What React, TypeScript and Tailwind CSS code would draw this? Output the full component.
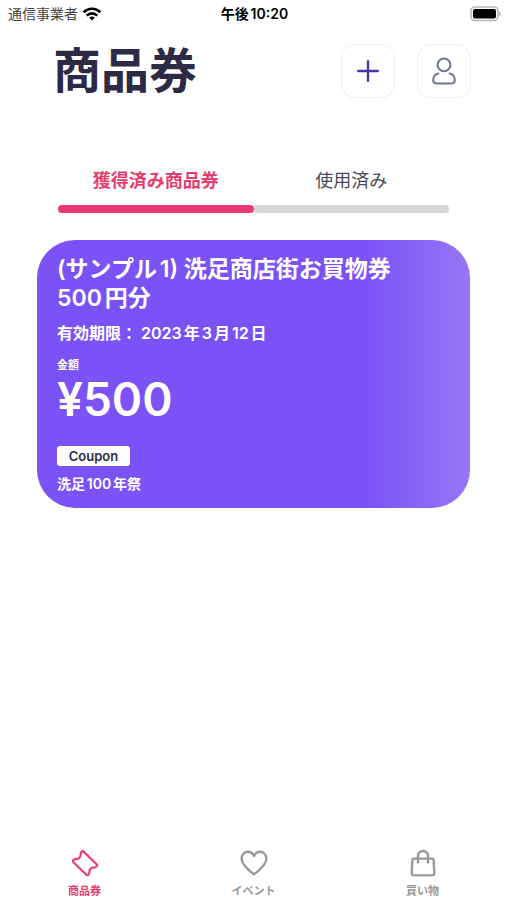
import React from 'react';

const tabs = [
  { label: '獲得済み商品券', active: true },
  { label: '使用済み', active: false },
];

function WifiIcon() {
  return (
    <svg width="20" height="14" viewBox="0 0 20 14" fill="none" stroke="#000" strokeWidth="2.6" aria-hidden="true">
      <path d="M1.6 5.2a12 12 0 0 1 16.8 0" />
      <path d="M4.7 8.6a7.5 7.5 0 0 1 10.6 0" />
      <path d="M10 13.6 7.2 10.8a4 4 0 0 1 5.6 0Z" fill="#000" stroke="none" />
    </svg>
  );
}

function BatteryIcon() {
  return (
    <svg width="32" height="16" viewBox="0 0 32 16" aria-hidden="true">
      <rect x="2" y="1" width="27" height="13.5" rx="4" fill="#fff" stroke="#b8b8b8" strokeWidth="1.6" />
      <rect x="4" y="3" width="23" height="9.5" rx="2" fill="#000" />
      <path d="M30.2 5.4v4.8c2-1 2-3.8 0-4.8Z" fill="#a8a8a8" />
    </svg>
  );
}

function PlusIcon() {
  return (
    <svg width="24" height="24" viewBox="0 0 24 24" fill="none" stroke="#4d35a3" strokeWidth="2.4" strokeLinecap="round" aria-hidden="true">
      <path d="M12 2.2v19.6M2.2 12h19.6" />
    </svg>
  );
}

function UserIcon() {
  return (
    <svg width="26" height="28" viewBox="0 0 26 28" fill="none" stroke="#6e7891" strokeWidth="2" strokeLinecap="round" strokeLinejoin="round" aria-hidden="true">
      <circle cx="13" cy="7.8" r="6.4" />
      <path d="M7.4 16.4C4 17 2.2 19.4 2.2 23c0 2.4 1 3.4 3.2 3.4h15.2c2.2 0 3.2-1 3.2-3.4 0-3.6-1.8-6-5.2-6.6" />
    </svg>
  );
}

function TicketIcon() {
  return (
    <svg width="28" height="28" viewBox="0 0 28 28" fill="none" stroke="#e63e70" strokeWidth="2.2" strokeLinejoin="round" aria-hidden="true">
      <path d="M12.6 2.6a1.4 1.4 0 0 0-2.2.2L9.6 4.8c.6 3.200-1.800 5.600-5 5l-2 1.200a1.400 1.400 0 0 0-.2 2.200L15.400 25.800a1.400 1.400 0 0 0 2.200-.2l.8-2c-.6-3.200 1.800-5.600 5-5l2-1.200a1.400 1.400 0 0 0 .2-2.200Z" />
    </svg>
  );
}

function HeartIcon() {
  return (
    <svg width="28" height="28" viewBox="0 0 28 28" fill="none" stroke="#999" strokeWidth="2.4" strokeLinejoin="round" aria-hidden="true">
      <path d="M14 25.4C9 21.6 1.6 16 1.6 9.8 1.6 5.6 4.4 2.8 7.8 2.8c2.8 0 5 1.6 6.2 4.2 1.2-2.6 3.4-4.2 6.2-4.2 3.4 0 6.2 2.8 6.2 7C26.4 16 19 21.6 14 25.4Z" />
    </svg>
  );
}

function BagIcon() {
  return (
    <svg width="28" height="28" viewBox="0 0 28 28" fill="none" stroke="#999" strokeWidth="2.4" strokeLinecap="round" strokeLinejoin="round" aria-hidden="true">
      <path d="M5 9.6h18c1 0 1.5.5 1.6 1.4l.7 12.8c.1 1.7-.7 2.6-2.3 2.6H5c-1.6 0-2.4-.9-2.3-2.6L3.400 11C3.500 10.100 4 9.600 5 9.600Z" />
      <path d="M9 13.4V7a5 5 0 0 1 10 0v6.4" />
    </svg>
  );
}

const navItems = [
  { label: '商品券', icon: <TicketIcon />, active: true },
  { label: 'イベント', icon: <HeartIcon />, active: false },
  { label: '買い物', icon: <BagIcon />, active: false },
];

export default function App() {
  return (
    <div
      lang="ja"
      className="flex min-h-screen flex-col bg-white font-['Inter','Noto_Sans_CJK_JP',sans-serif] text-[#2d2a45] [text-autospace:normal]"
    >
      <div className="grid h-7 grid-cols-3 items-center pr-1.5 pl-2 text-sm leading-5 text-black">
        <div className="flex items-center gap-1">
          <span className="text-[#444]">通信事業者</span>
          <WifiIcon />
        </div>
        <span className="text-center font-semibold">午後10:20</span>
        <span className="justify-self-end">
          <BatteryIcon />
        </span>
      </div>

      <header className="flex items-center justify-between pt-4 pr-9 pl-[53px]">
        <h1 className="text-[48px] leading-[54px] font-bold">商品券</h1>
        <div className="flex gap-[22px]">
          <button type="button" aria-label="追加" className="flex size-[54px] items-center justify-center rounded-[14px] border border-[#f0f0f2]">
            <PlusIcon />
          </button>
          <button type="button" aria-label="アカウント" className="flex size-[54px] items-center justify-center rounded-[14px] border border-[#f0f0f2]">
            <UserIcon />
          </button>
        </div>
      </header>

      <div role="tablist" className="mt-[69px] flex px-[58px]">
        {tabs.map((tab) => (
          <button
            key={tab.label}
            type="button"
            role="tab"
            aria-selected={tab.active}
            className={
              tab.active
                ? 'flex-1 text-center text-lg leading-7 font-bold text-[#e63e70]'
                : 'flex-1 text-center text-lg leading-7 text-[#4a4a58]'
            }
          >
            {tab.label}
            <span
              className={
                tab.active
                  ? 'mt-2.5 block h-2 rounded-full bg-[#e63b70]'
                  : 'mt-2.5 block h-2 rounded-full bg-[#d6d6d6]'
              }
            />
          </button>
        ))}
      </div>

      <main className="flex-1 px-[37px] pt-[27px]">
        <article className="rounded-[38px] bg-linear-to-r from-[#7b52f5] from-76% to-[#9676f7] px-5 pt-[15px] pb-[14px] font-semibold text-white">
          <h2 className="max-w-[350px] text-[23px] leading-[29px]">
            (サンプル1) 洗足商店街お買物券500円分
          </h2>
          <p className="mt-2 text-base leading-6">有効期限： 2023年3月12日</p>
          <p className="mt-3 text-[11px] leading-4">金額</p>
          <p className="text-[46px] leading-[52px]">¥500</p>
          <span className="mt-[21px] block w-[73px] rounded-[3px] bg-white text-center text-[13px] leading-5 text-[#2d2a45]">
            Coupon
          </span>
          <p className="mt-2 text-sm leading-5">洗足100年祭</p>
        </article>
      </main>

      <nav className="grid grid-cols-3 pb-px">
        {navItems.map((item) => (
          <a
            key={item.label}
            href="#"
            className={
              item.active
                ? 'flex flex-col items-center gap-1.5 text-[11px] leading-4 font-bold text-[#e63e70]'
                : 'flex flex-col items-center gap-1.5 text-[11px] leading-4 font-bold text-[#999]'
            }
          >
            {item.icon}
            {item.label}
          </a>
        ))}
      </nav>
    </div>
  );
}
